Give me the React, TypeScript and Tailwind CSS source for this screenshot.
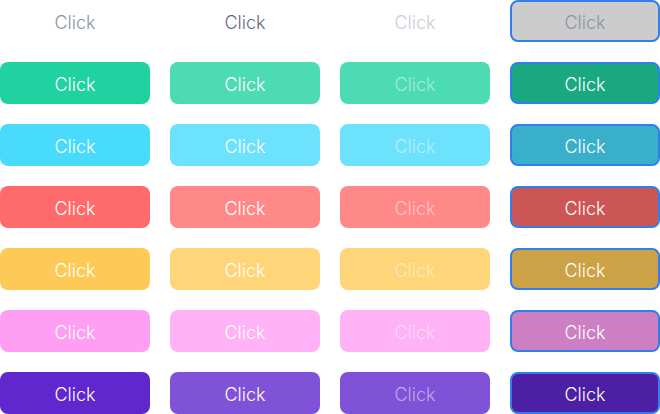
import React from "react";

interface Variant {
  base: string;
  hover: string;
  disabled: string;
  pressed: string;
}

const variants: Variant[] = [
  {
    base: "bg-[#1fd2a0] text-white",
    hover: "bg-[#4cdbb3] text-white",
    disabled: "bg-[#4cdbb3] text-white/50",
    pressed: "bg-[#19a880] text-white",
  },
  {
    base: "bg-[#48dbfb] text-white",
    hover: "bg-[#6de2fc] text-white",
    disabled: "bg-[#6de2fc] text-white/50",
    pressed: "bg-[#3aafc9] text-white",
  },
  {
    base: "bg-[#ff6b6b] text-white",
    hover: "bg-[#ff8989] text-white",
    disabled: "bg-[#ff8989] text-white/50",
    pressed: "bg-[#cc5656] text-white",
  },
  {
    base: "bg-[#feca57] text-white",
    hover: "bg-[#fed579] text-white",
    disabled: "bg-[#fed579] text-white/50",
    pressed: "bg-[#cba246] text-white",
  },
  {
    base: "bg-[#ff9ff3] text-white",
    hover: "bg-[#ffb2f5] text-white",
    disabled: "bg-[#ffb2f5] text-white/50",
    pressed: "bg-[#cc7fc2] text-white",
  },
  {
    base: "bg-[#5f27cd] text-white",
    hover: "bg-[#7f52d7] text-white",
    disabled: "bg-[#7f52d7] text-white/50",
    pressed: "bg-[#4c1fa4] text-white",
  },
];

const Btn = ({ className }: { className: string }) => (
  <button
    className={`h-[42px] w-[150px] rounded-lg flex items-center justify-center pt-[2px] text-[18px] font-light antialiased ${className}`}
  >
    Click
  </button>
);

export default function App() {
  return (
    <div
      className="w-[660px] h-[414px] bg-white flex flex-col gap-5"
      style={{ fontFamily: "Inter, 'Noto Sans', sans-serif" }}
    >
      {/* Ghost row */}
      <div className="flex gap-5">
        <Btn className="text-[#8a94a6]" />
        <Btn className="text-[#5e6a7d]" />
        <Btn className="text-[#c9ced6]" />
        <Btn className="bg-[#cccccc] text-[#8a94a6] border-2 border-[#2f80ed]" />
      </div>

      {variants.map((v, i) => (
        <div key={i} className="flex gap-5">
          <Btn className={v.base} />
          <Btn className={v.hover} />
          <Btn className={v.disabled} />
          <Btn className={`${v.pressed} border-2 border-[#2f80ed]`} />
        </div>
      ))}
    </div>
  );
}
